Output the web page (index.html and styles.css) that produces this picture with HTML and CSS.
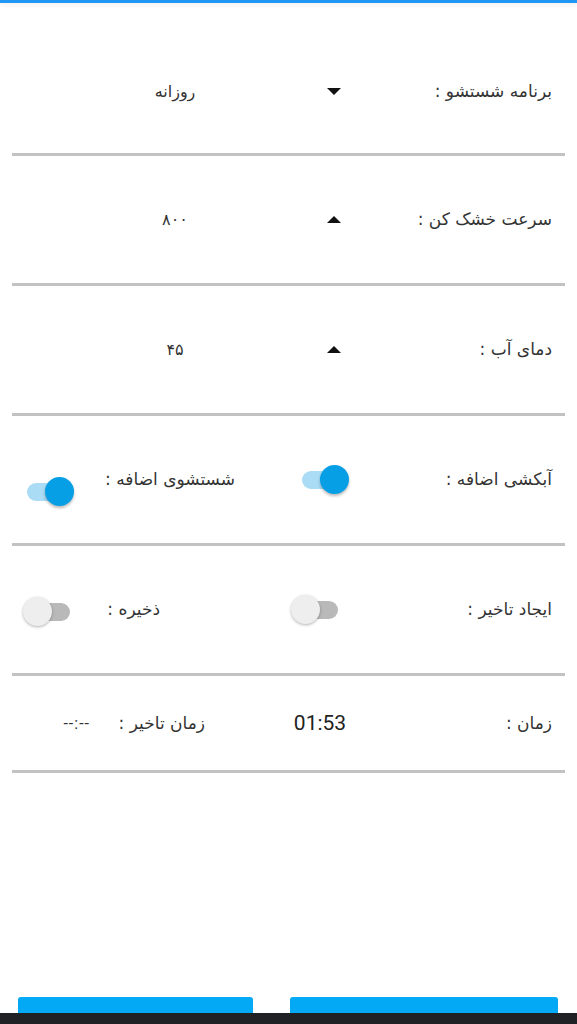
FILE: index.html
```html
<!DOCTYPE html>
<html lang="fa">
<head>
<meta charset="utf-8">
<title>تنظیمات شستشو</title>
<link rel="stylesheet" href="styles.css">
</head>
<body>
<div class="page">
  <div class="topbar"></div>
  <div class="spacer-top"></div>

  <div class="row row-first">
    <div class="label">برنامه شستشو :</div>
    <div class="arrow arrow-down"></div>
    <div class="value">روزانه</div>
    <div class="empty"></div>
  </div>
  <div class="divider"></div>

  <div class="row">
    <div class="label">سرعت خشک کن :</div>
    <div class="arrow arrow-up"></div>
    <div class="value">۸۰۰</div>
    <div class="empty"></div>
  </div>
  <div class="divider"></div>

  <div class="row">
    <div class="label">دمای آب :</div>
    <div class="arrow arrow-up"></div>
    <div class="value">۴۵</div>
    <div class="empty"></div>
  </div>
  <div class="divider"></div>

  <div class="row">
    <div class="label">آبکشی اضافه :</div>
    <div class="switch on sw-b4"><span class="track"></span><span class="thumb"></span></div>
    <div class="label lbl-c4">شستشوی اضافه :</div>
    <div class="switch on sw-d4"><span class="track"></span><span class="thumb"></span></div>
  </div>
  <div class="divider"></div>

  <div class="row">
    <div class="label">ایجاد تاخیر :</div>
    <div class="switch off sw-b5"><span class="track"></span><span class="thumb"></span></div>
    <div class="label lbl-c5">ذخیره :</div>
    <div class="switch off sw-d5"><span class="track"></span><span class="thumb"></span></div>
  </div>
  <div class="divider"></div>

  <div class="row row-last">
    <div class="label">زمان :</div>
    <div class="time">01:53</div>
    <div class="label lbl-c6">زمان تاخیر :</div>
    <div class="dash">--:--</div>
  </div>
  <div class="divider"></div>

  <div class="buttons">
    <div class="btn btn-right"></div>
    <div class="btn btn-left"></div>
  </div>
</div>
<div class="navbar"></div>
</body>
</html>
```

FILE: styles.css
```css
html, body {
  margin: 0;
  padding: 0;
  background: #ffffff;
}

body {
  width: 577px;
  height: 1024px;
  overflow: hidden;
  font-family: "DejaVu Sans", sans-serif;
  color: #333333;
}

.page {
  direction: rtl;
  display: flex;
  flex-direction: column;
}

.topbar {
  height: 3px;
  background: #2196f3;
  box-shadow: 0 2px 5px rgba(0, 0, 0, 0.08);
}

.spacer-top {
  height: 27px;
}

.row {
  display: grid;
  grid-template-columns: 197px 120px 160px 100px;
  align-items: center;
  height: 127px;
}

.row-first {
  height: 123px;
}

.row-last {
  height: 94px;
}

.divider {
  height: 3px;
  margin: 0 12px;
  background: #c2c2c2;
}

.label {
  justify-self: start;
  margin-right: 25px;
  font-size: 17px;
  white-space: nowrap;
  line-height: 1;
}

.arrow {
  justify-self: start;
  margin-right: 39px;
  width: 0;
  height: 0;
  border-left: 7px solid transparent;
  border-right: 7px solid transparent;
}

.arrow-down {
  border-top: 7px solid #111111;
}

.arrow-up {
  border-bottom: 7px solid #111111;
}

.value {
  justify-self: center;
  margin-right: 10px;
  font-size: 16px;
  line-height: 1;
}

.lbl-c4 {
  margin-right: 25px;
}

.lbl-c5 {
  margin-right: 100px;
}

.lbl-c6 {
  margin-right: 55px;
}

.time {
  justify-self: center;
  font-family: Roboto, "Liberation Sans", sans-serif;
  font-size: 21px;
  color: #222222;
  direction: ltr;
  unicode-bidi: isolate;
}

.dash {
  justify-self: start;
  margin-right: 10px;
  font-family: Roboto, "Liberation Sans", sans-serif;
  font-size: 16px;
  letter-spacing: 1px;
  color: #333333;
  direction: ltr;
  unicode-bidi: isolate;
}

/* switches */
.switch {
  position: relative;
  justify-self: start;
  width: 47px;
  height: 30px;
}

.switch .track {
  position: absolute;
  top: 6px;
  height: 18px;
  width: 39px;
  border-radius: 9px;
}

.switch .thumb {
  position: absolute;
  top: 0;
  width: 29px;
  height: 29px;
  border-radius: 50%;
  box-shadow: 0 2px 3px rgba(0, 0, 0, 0.28);
}

.switch.on .track {
  left: 0;
  background: #aadcf6;
}

.switch.on .thumb {
  right: 0;
  background: #069fe6;
}

.switch.off .track {
  right: 0;
  background: #b9b9b9;
}

.switch.off .thumb {
  left: 0;
  background: #eeeeee;
  box-shadow: 0 1px 3px rgba(0, 0, 0, 0.3);
}

.sw-b4 {
  margin-right: 31px;
}

.sw-d4 {
  margin-right: 26px;
  margin-top: 24px;
}

.sw-b5 {
  margin-right: 42px;
}

.sw-d5 {
  margin-right: 30px;
  margin-top: 4px;
}

.buttons {
  display: flex;
  margin-top: 224px;
  padding: 0 19px 0 18px;
  gap: 37px;
}

.btn {
  height: 40px;
  background: #03a9f4;
  border-radius: 3px;
}

.btn-right {
  width: 268px;
}

.btn-left {
  width: 235px;
}

.navbar {
  position: fixed;
  left: 0;
  right: 0;
  bottom: 0;
  height: 11px;
  background: #202124;
}
```
